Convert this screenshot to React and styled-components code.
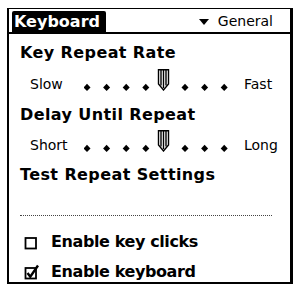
import React from "react";
import styled, { createGlobalStyle } from "styled-components";

const GlobalStyle = createGlobalStyle`
  html, body {
    margin: 0;
    padding: 0;
    background: #fff;
  }
  body {
    font-family: "DejaVu Sans", sans-serif;
    color: #000;
  }
`;

const DOTS = [3, 22.6, 42.2, 61.8, 101, 120.6, 140.2];

const Slider = () => (
  <SliderSvg width="145" height="22" viewBox="0 0 145 22">
    {DOTS.map((x) => (
      <path key={x} d={`M${x} 14.7 L${x + 3.5} 18.5 L${x} 22 L${x - 3.5} 18.5 Z`} fill="#000" />
    ))}
    <g stroke="#000" strokeWidth="1.4" fill="#fff">
      <path d="M74.5 0.7 H84.5 V15 L79.5 21 L74.5 15 Z" />
      <path d="M77 1 V16.5 M79.5 1 V19 M82 1 V16.5" fill="none" />
    </g>
  </SliderSvg>
);

const CheckBox = ({ checked }) => (
  <BoxSvg width="17" height="16" viewBox="0 0 17 16">
    <rect x="1.5" y="4" width="10.5" height="10.5" fill="none" stroke="#000" strokeWidth="1.8" />
    {checked && (
      <path d="M3.5 9 L6.3 12.8 L14 1.5" fill="none" stroke="#000" strokeWidth="2.4" />
    )}
  </BoxSvg>
);

const App = () => {
  return (
    <>
      <GlobalStyle />
      <Frame>
        <Header>
          <TitleTab>Keyboard</TitleTab>
          <Picker>
            <Arrow />
            General
          </Picker>
        </Header>
        <Content>
          <Heading $top={10}>Key Repeat Rate</Heading>
          <SliderRow $top={7}>
            <Label>Slow</Label>
            <Slider />
            <EndLabel>Fast</EndLabel>
          </SliderRow>
          <Heading $top={15}>Delay Until Repeat</Heading>
          <SliderRow $top={6}>
            <Label>Short</Label>
            <Slider />
            <EndLabel>Long</EndLabel>
          </SliderRow>
          <Heading $top={14}>Test Repeat Settings</Heading>
          <Divider />
          <CheckRow $top={17}>
            <CheckBox />
            <CheckText>Enable key clicks</CheckText>
          </CheckRow>
          <CheckRow $top={13}>
            <CheckBox checked />
            <CheckText>Enable keyboard</CheckText>
          </CheckRow>
        </Content>
      </Frame>
    </>
  );
};

// ----------------- Styled Components -----------------

const Frame = styled.div`
  box-sizing: border-box;
  margin: 8px 0 0 7px;
  width: 286px;
  height: 276px;
  border: 2px solid #000;
  border-top-width: 1px;
  border-right-width: 3px;
  display: flex;
  flex-direction: column;
`;

const Header = styled.div`
  box-sizing: border-box;
  height: 25px;
  padding: 2px 17px 0 3px;
  border-bottom: 2px solid #000;
  display: flex;
  align-items: flex-end;
  justify-content: space-between;
`;

const TitleTab = styled.div`
  height: 21px;
  line-height: 21px;
  padding: 0 6px 0 2px;
  background: #000;
  color: #fff;
  font-weight: bold;
  font-size: 16px;
  border-radius: 2px 2px 0 0;
`;

const Picker = styled.div`
  height: 21px;
  line-height: 21px;
  font-size: 14px;
  display: flex;
  align-items: center;
  gap: 9px;
`;

const Arrow = styled.span`
  width: 0;
  height: 0;
  border-left: 5.5px solid transparent;
  border-right: 5.5px solid transparent;
  border-top: 6px solid #000;
`;

const Content = styled.div`
  display: flex;
  flex-direction: column;
  padding-left: 11px;
`;

const Heading = styled.div`
  margin-top: ${(p) => p.$top}px;
  font-weight: bold;
  font-size: 16px;
  line-height: 18px;
  letter-spacing: 0.4px;
`;

const SliderRow = styled.div`
  margin-top: ${(p) => p.$top}px;
  height: 22px;
  padding-left: 10px;
  display: flex;
  align-items: flex-end;
`;

const Label = styled.span`
  width: 54px;
  font-size: 14px;
  line-height: 14px;
`;

const EndLabel = styled(Label)`
  width: auto;
  margin-left: 15px;
`;

const SliderSvg = styled.svg`
  display: block;
`;

const Divider = styled.div`
  margin: 31px 9px 0 0;
  width: 252px;
  border-top: 1px dotted #444;
`;

const CheckRow = styled.div`
  margin-top: ${(p) => p.$top}px;
  padding-left: 4px;
  display: flex;
  align-items: flex-end;
  gap: 10px;
`;

const BoxSvg = styled.svg`
  display: block;
  flex: none;
`;

const CheckText = styled.span`
  font-weight: bold;
  font-size: 16px;
  line-height: 18px;
  letter-spacing: -0.4px;
  margin-bottom: -1px;
`;

export default App;
